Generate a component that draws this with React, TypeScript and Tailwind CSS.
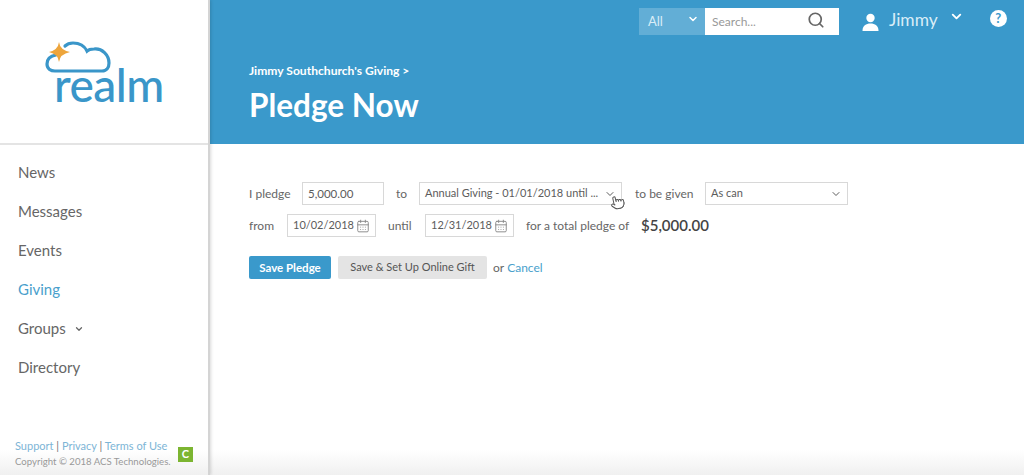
import React from 'react';
import { ChevronDown, Search, CalendarDays, Pointer } from 'lucide-react';

const navItems = ['News', 'Messages', 'Events', 'Giving', 'Groups', 'Directory'];

function RealmLogo() {
  return (
    <div className="w-[120px] h-[64px] relative">
      <svg width="70" height="34" viewBox="0 0 70 34" className="absolute left-0 top-0">
        <path
          d="M12 14 C6 15 3 18 3 23 C3 28 7 30 11 30 L58 30 C63 30 65 26 65 22 C65 14 58 7 50 8 C47 8 45 8 43 10 C40 4 34 2 29 2 C26 2 23 3 21 5"
          fill="none"
          stroke="#3a96c9"
          strokeWidth="3.2"
          strokeLinecap="round"
        />
        <path d="M15 1 Q16 9 26 11 Q16 13 15 21 Q14 13 5 11 Q14 9 15 1 Z" fill="#eda53c" />
      </svg>
      <span className="absolute left-[10px] top-[20px] text-[46px] leading-[48px] text-[#3a96c9] tracking-[-0.5px] font-medium">realm</span>
    </div>
  );
}

function Field({ value, className, children }: { value: string; className: string; children?: React.ReactNode }) {
  return (
    <div className={`relative h-[23px] border border-[#d8d8d8] bg-white flex items-center justify-between pl-[5px] pr-[5px] text-[#5c5c5c] ${className}`}>
      <span className="whitespace-nowrap">{value}</span>
      {children}
    </div>
  );
}

export default function App() {
  return (
    <div
      className="w-[1024px] h-[475px] flex overflow-hidden bg-[linear-gradient(to_bottom,#ffffff_450px,#f0f0f0_475px)] text-[12px] text-[#666]"
      style={{ fontFamily: 'Lato, sans-serif' }}
    >
      <aside className="w-[210px] h-full flex flex-col shrink-0 border-r-2 border-[#d4d4d4] shadow-[1px_0_3px_rgba(0,0,0,0.15)] z-10">
        <div className="h-[145px] shrink-0 border-b-2 border-[#e4e4e4] pl-[44px] pt-[41px]">
          <RealmLogo />
        </div>
        <nav className="flex flex-col pt-[8px] pl-[18px] text-[15px]">
          {navItems.map((item) => (
            <a key={item} className={`h-[39px] flex items-center gap-[8px] ${item === 'Giving' ? 'text-[#4a9fcc]' : 'text-[#666]'}`}>
              {item}
              {item === 'Groups' && <ChevronDown size={10} strokeWidth={3} />}
            </a>
          ))}
        </nav>
        <div className="mt-auto pl-[15px] pb-[5px] flex items-end">
          <div className="w-[158px] shrink-0">
            <div className="text-[11px] leading-[16px] text-[#7db5d6]">
              Support <span className="text-[#777]">|</span> Privacy <span className="text-[#777]">|</span> Terms of Use
            </div>
            <div className="text-[9.6px] leading-[16px] text-[#999] whitespace-nowrap">Copyright © 2018 ACS Technologies.</div>
          </div>
          <div className="w-[15px] h-[15px] bg-[#7cb531] text-white text-[11px] font-bold flex items-center justify-center ml-[5px] mb-[8px]">C</div>
        </div>
      </aside>

      <main className="flex-1 flex flex-col min-w-0">
        <header className="h-[144px] shrink-0 bg-[#3a99cb] relative pl-[39px] pt-[63px] text-white">
          <div className="absolute top-[8px] left-[429px] flex items-center">
            <div className="w-[66px] h-[27px] bg-[#62aed6] flex items-center justify-between pl-[9px] pr-[6px] text-[13px] text-[#d9edf7]">
              All
              <ChevronDown size={12} strokeWidth={3} className="-mt-[6px] text-white" />
            </div>
            <div className="w-[134px] h-[27px] bg-white flex items-center justify-between pl-[7px] pr-[14px] text-[12px] text-[#999]">
              Search...
              <Search size={18} strokeWidth={2.3} className="text-[#666] -mt-[3px]" />
            </div>
          </div>
          <div className="absolute top-[8px] left-[652px] flex items-center text-[17.4px] leading-[24px]">
            <svg width="17" height="18" viewBox="0 0 17 18" className="mt-[4px]">
              <circle cx="8.5" cy="5" r="4.2" fill="white" />
              <path d="M0.5 18 C0.5 12.5 4 10.5 8.5 10.5 C13 10.5 16.5 12.5 16.5 18 Z" fill="white" />
            </svg>
            <span className="ml-[10px] text-[#d9edf7]">Jimmy</span>
            <ChevronDown size={15} strokeWidth={3} className="ml-[11px] -mt-[8px]" />
            <div className="w-[17px] h-[17px] ml-[26px] -mt-[4px] rounded-full bg-white text-[#3a99cb] text-[13px] leading-[17px] font-bold text-center">?</div>
          </div>
          <div className="text-[12.1px] leading-[15px] font-bold">Jimmy Southchurch's Giving &gt;</div>
          <h1 className="text-[31.5px] leading-[36px] mt-[9px] font-bold">Pledge Now</h1>
        </header>

        <section className="pl-[39px] pt-[38px]">
          <div className="flex items-center h-[23px]">
            <span className="w-[53px]">I pledge</span>
            <Field value="5,000.00" className="w-[82px] text-[11.5px]" />
            <span className="ml-[12px] w-[23px]">to</span>
            <Field value="Annual Giving - 01/01/2018 until ..." className="w-[203px] text-[11px]">
              <ChevronDown size={12} className="shrink-0" />
              <Pointer size={15} strokeWidth={1.6} fill="white" className="absolute left-[190px] top-[12px] -rotate-12 text-[#555]" />
            </Field>
            <span className="ml-[13px] w-[70px]">to be given</span>
            <Field value="As can" className="w-[143px] text-[11px] pl-[4px]">
              <ChevronDown size={12} className="shrink-0" />
            </Field>
          </div>
          <div className="flex items-center h-[23px] mt-[9px]">
            <span className="w-[38px]">from</span>
            <Field value="10/02/2018" className="w-[89px] text-[11px]">
              <CalendarDays size={14} strokeWidth={1.6} className="shrink-0 text-[#888]" />
            </Field>
            <span className="ml-[12px] w-[37px]">until</span>
            <Field value="12/31/2018" className="w-[89px] text-[11px]">
              <CalendarDays size={14} strokeWidth={1.6} className="shrink-0 text-[#888]" />
            </Field>
            <span className="ml-[12px] w-[115px]">for a total pledge of</span>
            <span className="text-[15px] font-semibold text-[#444]">$5,000.00</span>
          </div>
          <div className="flex items-center h-[23px] mt-[19px]">
            <button className="w-[82px] h-[23px] bg-[#3a99cb] rounded-[2px] text-white font-bold text-[11.5px]">Save Pledge</button>
            <button className="w-[149px] h-[23px] ml-[7px] bg-[#e4e4e4] rounded-[2px] text-[#555] text-[11px]">Save &amp; Set Up Online Gift</button>
            <span className="ml-[6px]">or</span>
            <a className="ml-[3px] text-[#4a9fcc]">Cancel</a>
          </div>
        </section>
      </main>
    </div>
  );
}
